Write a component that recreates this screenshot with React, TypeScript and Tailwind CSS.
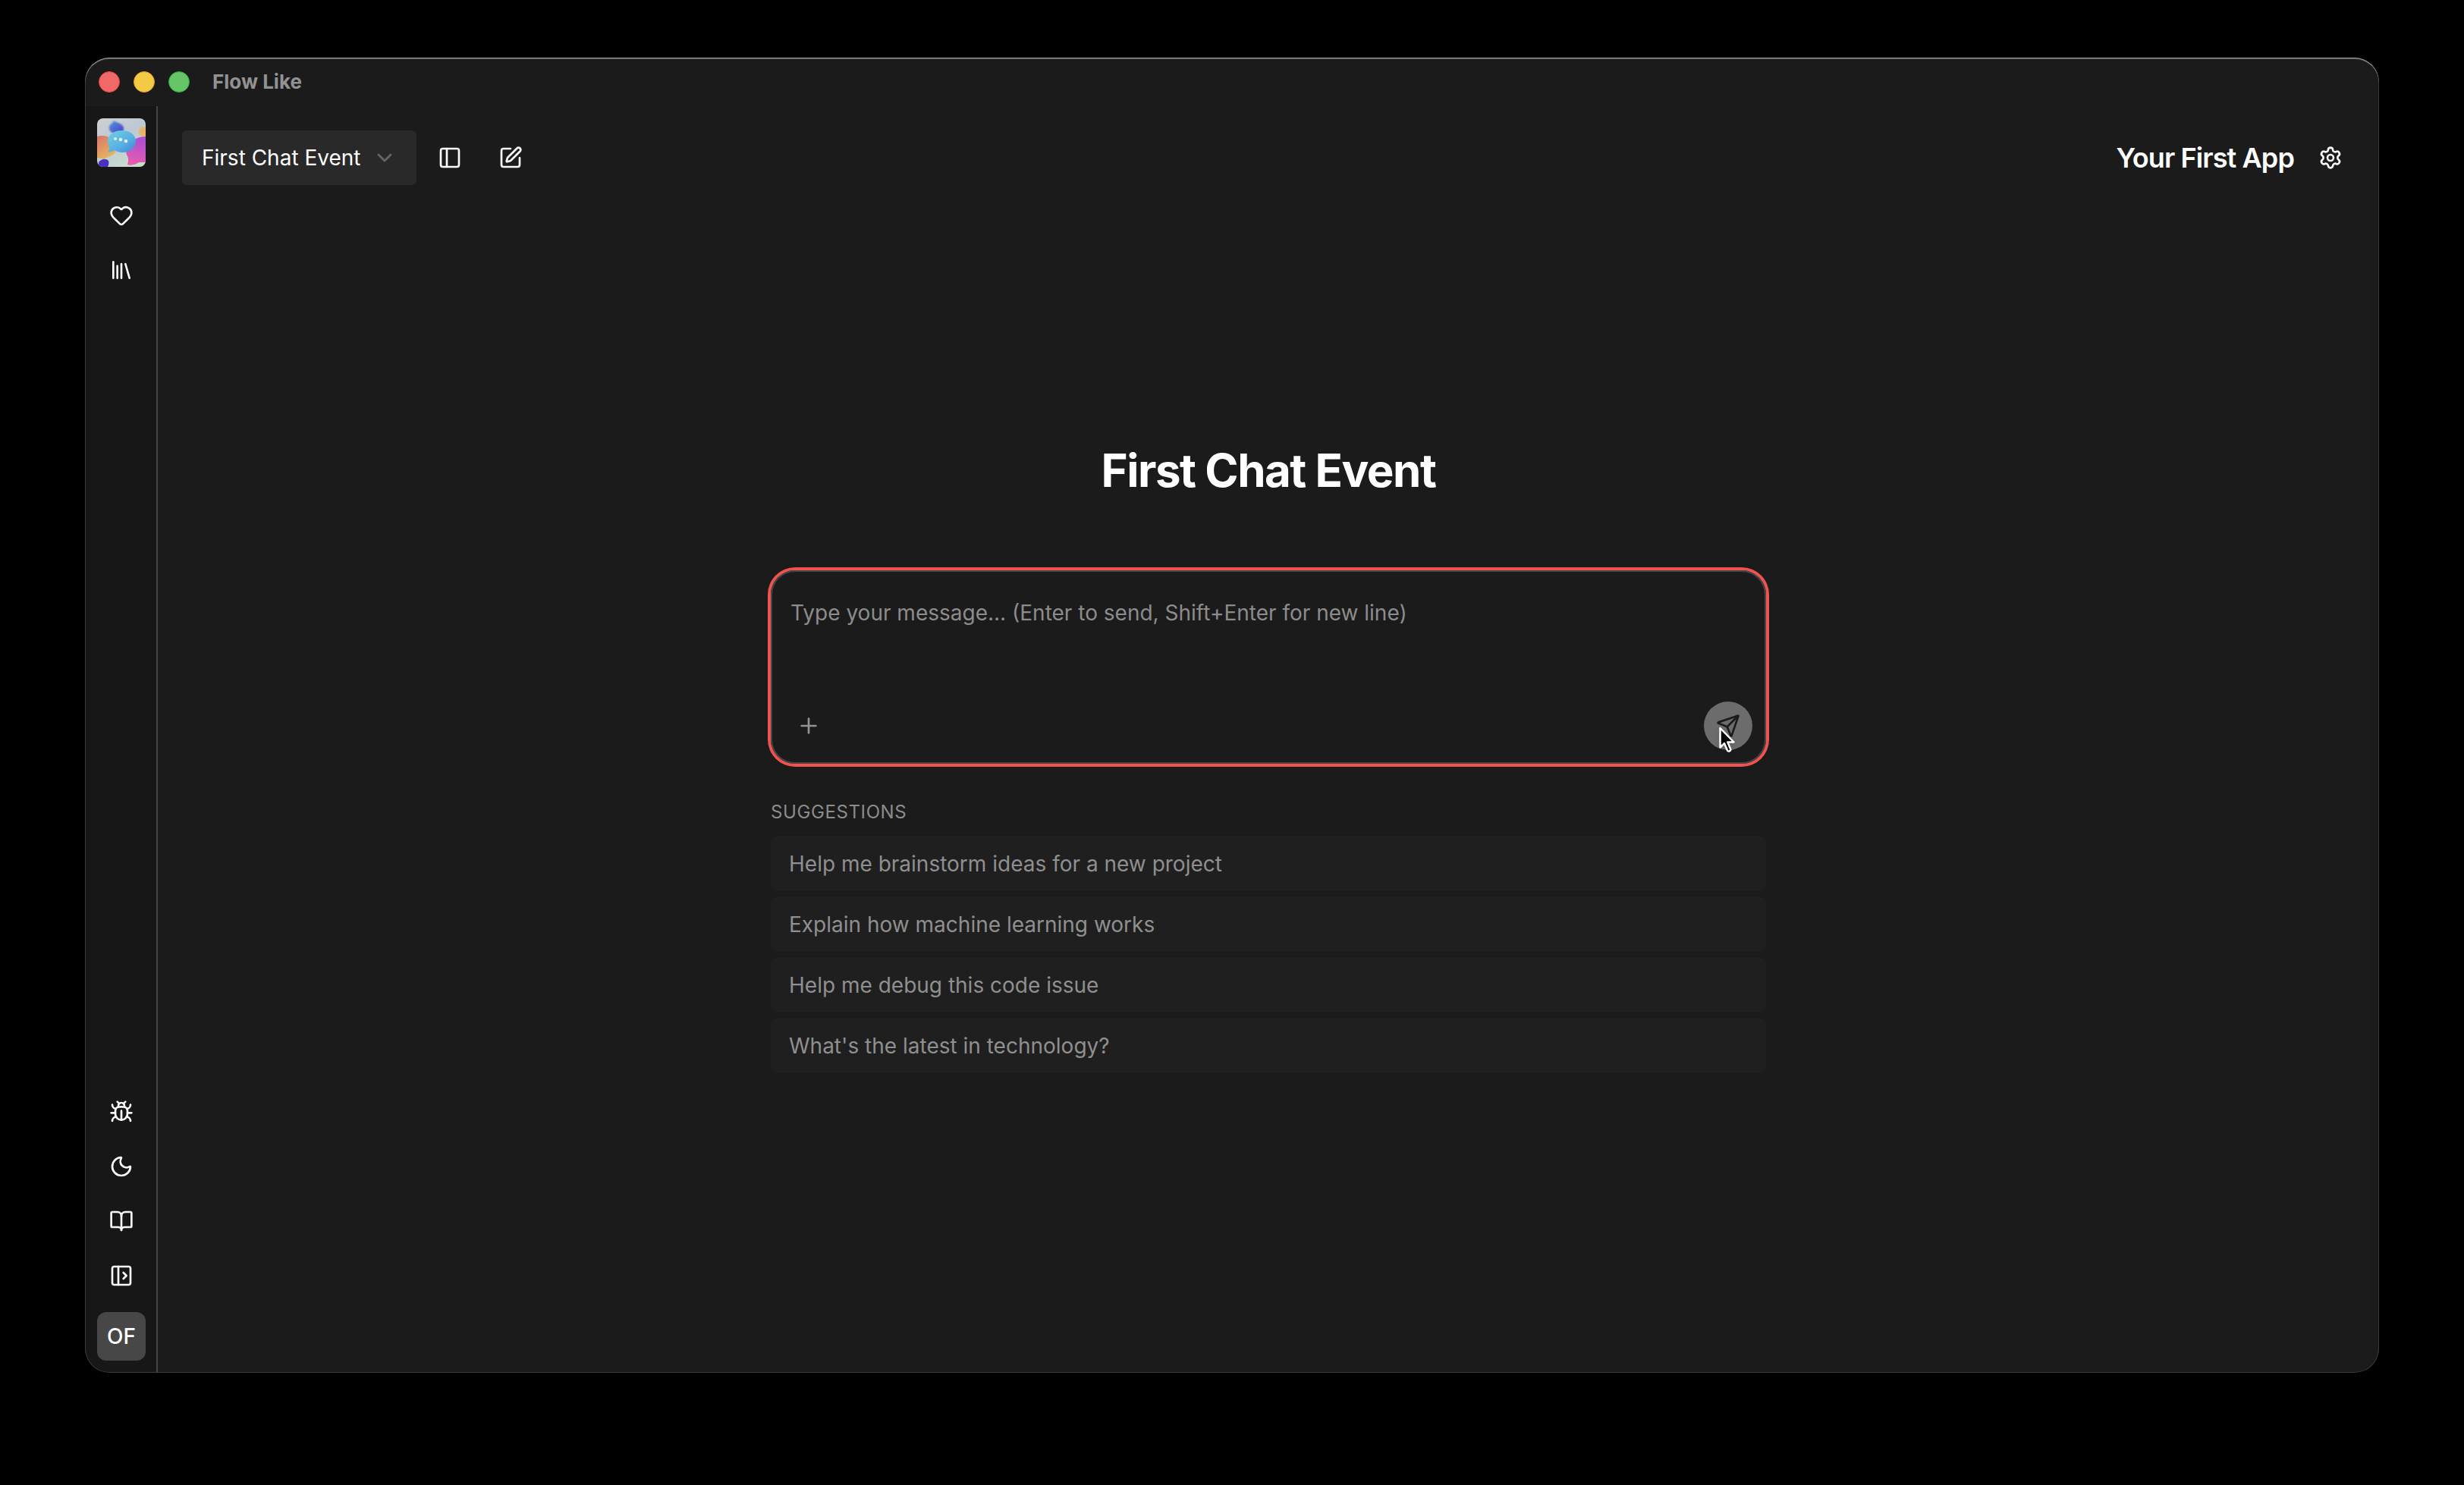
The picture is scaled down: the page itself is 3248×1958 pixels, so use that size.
import type { ReactNode } from "react";
import {
  BookOpen,
  Bug,
  ChevronDown,
  Heart,
  Library,
  Moon,
  PanelLeft,
  PanelLeftOpen,
  Plus,
  Send,
  Settings,
  SquarePen,
} from "lucide-react";

const suggestions = [
  "Help me brainstorm ideas for a new project",
  "Explain how machine learning works",
  "Help me debug this code issue",
  "What's the latest in technology?",
];

function IconButton({ label, children }: { label: string; children: ReactNode }) {
  return (
    <button
      type="button"
      aria-label={label}
      className="flex size-16 shrink-0 items-center justify-center rounded-lg text-[#fafafa]"
    >
      {children}
    </button>
  );
}

function AppLogo() {
  return (
    <svg viewBox="0 0 64 64" className="size-16 rounded-lg" aria-hidden="true">
      <defs>
        <linearGradient id="sky" x1="0" y1="0" x2="0.6" y2="1">
          <stop offset="0" stopColor="#cfd0cf" />
          <stop offset="0.5" stopColor="#bcc8d6" />
          <stop offset="1" stopColor="#cbdccb" />
        </linearGradient>
        <linearGradient id="orange" x1="0" y1="0" x2="0.5" y2="1">
          <stop offset="0" stopColor="#d8746c" />
          <stop offset="1" stopColor="#e8b45c" />
        </linearGradient>
        <linearGradient id="pink" x1="0.6" y1="0" x2="0.4" y2="1">
          <stop offset="0" stopColor="#a94fd6" />
          <stop offset="1" stopColor="#ea5cae" />
        </linearGradient>
        <linearGradient id="indigo" x1="0" y1="0" x2="1" y2="1">
          <stop offset="0" stopColor="#4a9ae0" />
          <stop offset="1" stopColor="#5136c4" />
        </linearGradient>
        <linearGradient id="cyan" x1="0" y1="0" x2="1" y2="1">
          <stop offset="0" stopColor="#74d2e2" />
          <stop offset="0.6" stopColor="#55aee2" />
          <stop offset="1" stopColor="#4483d8" />
        </linearGradient>
        <filter id="soft" x="-20%" y="-20%" width="140%" height="140%">
          <feGaussianBlur stdDeviation="0.8" />
        </filter>
      </defs>
      <rect width="64" height="64" fill="url(#sky)" />
      <path
        d="M22 3c1 1 3 2 6 3 5 2 8 5 7 9-1 5-7 7-12 5-5-1-8-5-7-9 1-4 5-4 6-8z"
        fill="url(#indigo)"
        filter="url(#soft)"
      />
      <circle cx="62" cy="18" r="7" fill="#e6b368" filter="url(#soft)" />
      <path d="M0 24c7-2 15-1 20 4 5 6 6 12 4 17-4 5-9 5-12 7-4 2-8 1-12 0z" fill="url(#orange)" />
      <path d="M64 24c-9 0-17 4-22 10-4 5-5 11-2 16 2 4 1 8 0 11 6 2 12-1 15-3l9 0z" fill="url(#pink)" />
      <path d="M2 58c3-4 9-6 13-2 1 3 0 6-1 8H2z" fill="#4a2fc0" />
      <path
        d="M33 16c10 0 18 6 18 14 0 9-8 15-18 15-4 0-7-1-10-3-3 2-6 3-9 2 2-2 2-4 2-7-1-2-2-4-2-7 0-8 8-14 19-14z"
        fill="url(#cyan)"
      />
      <circle cx="24" cy="27" r="2" fill="#e8eef6" />
      <circle cx="31" cy="28" r="2.3" fill="#e8eef6" />
      <circle cx="38" cy="30" r="2.3" fill="#e8eef6" />
    </svg>
  );
}

function Cursor() {
  return (
    <svg
      viewBox="0 0 24 38"
      className="pointer-events-none absolute top-8 left-[18px] h-[38px] w-6 drop-shadow-md"
      aria-hidden="true"
    >
      <path
        d="M3.5 3v25.500l5.500-5.300 4 9.300c1 2 5 .6 4.200-1.800l-3.900-9.200h8.200z"
        fill="#000"
        stroke="#fff"
        strokeWidth="2.500"
        strokeLinejoin="round"
      />
    </svg>
  );
}

function TitleBar() {
  return (
    <div className="flex h-16 shrink-0 items-center gap-[18px] px-[18px]">
      <button type="button" aria-label="Close" className="size-7 rounded-full border border-[#e0443e] bg-[#f06868]" />
      <button type="button" aria-label="Minimize" className="size-7 rounded-full border border-[#dea123] bg-[#f4c944]" />
      <button type="button" aria-label="Zoom" className="size-7 rounded-full border border-[#2ea63c] bg-[#65c567]" />
      <span className="ml-3 text-[26px] leading-8 font-bold text-[#929292]">Flow Like</span>
    </div>
  );
}

function Sidebar() {
  return (
    <nav className="flex w-24 shrink-0 flex-col items-start justify-between border-r-2 border-[#454545] bg-[#171717] py-4 pl-4">
      <div className="flex flex-col items-center gap-8">
        <AppLogo />
        <div className="flex flex-col gap-2">
          <IconButton label="Favorites">
            <Heart size={32} />
          </IconButton>
          <IconButton label="Library">
            <Library size={32} />
          </IconButton>
        </div>
      </div>
      <div className="flex flex-col items-center gap-4">
        <div className="flex flex-col gap-2">
          <IconButton label="Report a bug">
            <Bug size={32} />
          </IconButton>
          <IconButton label="Theme">
            <Moon size={32} />
          </IconButton>
          <IconButton label="Documentation">
            <BookOpen size={32} />
          </IconButton>
          <IconButton label="Expand sidebar">
            <PanelLeftOpen size={32} />
          </IconButton>
        </div>
        <button
          type="button"
          className="flex size-16 items-center justify-center rounded-xl bg-[#474747] text-[28px] leading-10 font-medium text-white"
        >
          OF
        </button>
      </div>
    </nav>
  );
}

function Header() {
  return (
    <header className="flex items-center justify-between p-8">
      <div className="flex items-center gap-2">
        <button
          type="button"
          className="flex h-[72px] items-center gap-4 rounded-md bg-[#292929] px-[26px] text-[28px] leading-10 text-white"
        >
          First Chat Event
          <ChevronDown size={32} className="text-[#666666]" />
        </button>
        <button type="button" aria-label="Toggle panel" className="flex size-[72px] items-center justify-center text-[#fafafa]">
          <PanelLeft size={32} />
        </button>
        <button type="button" aria-label="New chat" className="flex size-[72px] items-center justify-center text-[#fafafa]">
          <SquarePen size={32} />
        </button>
      </div>
      <div className="flex items-center gap-4">
        <h2 className="text-4xl font-semibold tracking-tight text-white">Your First App</h2>
        <IconButton label="Settings">
          <Settings size={32} />
        </IconButton>
      </div>
    </header>
  );
}

function Composer() {
  return (
    <form className="rounded-4xl border-2 border-[#454545] ring-4 ring-[#ef5350]">
      <textarea
        aria-label="Message"
        placeholder="Type your message... (Enter to send, Shift+Enter for new line)"
        className="block h-[171px] w-full resize-none bg-transparent px-6 py-8 text-[28px] leading-11 text-white outline-none placeholder:text-[#8c8c8c]"
      />
      <div className="flex items-center justify-between px-4 pb-4">
        <button type="button" aria-label="Add attachment" className="flex size-16 items-center justify-center text-[#949494]">
          <Plus size={32} />
        </button>
        <button
          type="button"
          aria-label="Send"
          className="relative flex size-16 items-center justify-center rounded-full bg-[#6c6c6c] text-[#1b1b1b]"
        >
          <Send size={32} />
          <Cursor />
        </button>
      </div>
    </form>
  );
}

export default function App() {
  return (
    <div className="min-h-screen bg-black px-28 pt-[76px] pb-[148px] font-[Inter,sans-serif] antialiased">
      <div className="relative flex min-h-[calc(100vh-224px)] flex-col overflow-hidden rounded-[32px] bg-[#1b1b1b] after:pointer-events-none after:absolute after:inset-0 after:rounded-[32px] after:shadow-[inset_0_1px_0_#a0a0a0,inset_0_2px_0_#5a5a5a,inset_0_0_0_1px_#3a3a3a]">
        <TitleBar />
        <div className="flex grow">
          <Sidebar />
          <main className="flex min-w-0 grow flex-col">
            <Header />
            <div className="flex grow flex-col items-center justify-center px-8 pb-[81px]">
              <div className="flex w-full max-w-[1312px] flex-col">
                <h1 className="mb-[102px] text-center text-6xl font-bold tracking-tight text-white">First Chat Event</h1>
                <Composer />
                <section className="mt-12 flex flex-col gap-4">
                  <h3 className="text-2xl leading-8 tracking-wide text-[#8c8c8c] uppercase">Suggestions</h3>
                  <ul className="flex flex-col gap-2">
                    {suggestions.map((text) => (
                      <li key={text}>
                        <button
                          type="button"
                          className="flex h-[72px] w-full items-center rounded-md bg-[#1f1f1f] px-6 text-left text-[28px] leading-10 text-[#8f8f8f]"
                        >
                          {text}
                        </button>
                      </li>
                    ))}
                  </ul>
                </section>
              </div>
            </div>
          </main>
        </div>
      </div>
    </div>
  );
}
